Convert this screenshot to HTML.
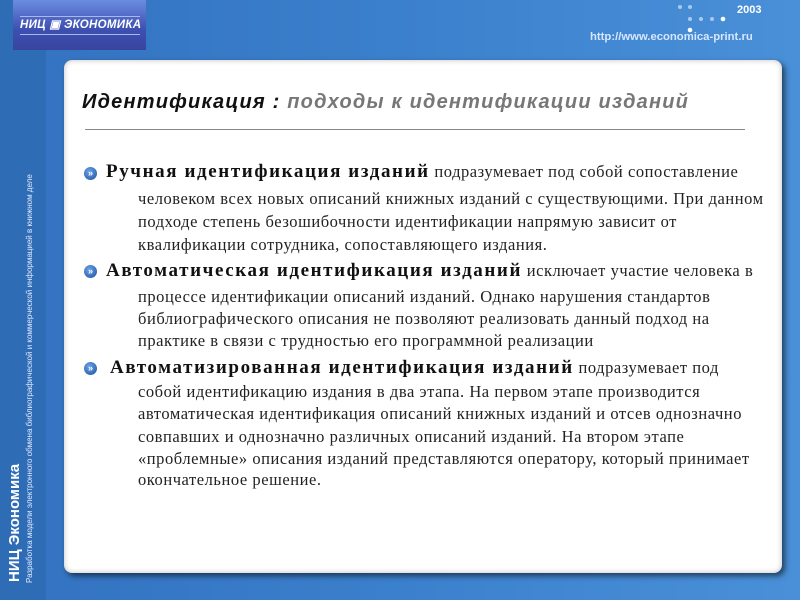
<!DOCTYPE html>
<html><head><meta charset="utf-8"><style>
body{margin:0;width:800px;height:600px;overflow:hidden;position:relative;background:linear-gradient(90deg,#3372c0 0%,#3b80cc 50%,#4a90d8 100%);font-family:"Liberation Serif",serif}
#strip{position:absolute;left:0;top:0;width:46px;height:600px;background:#2f6cb6}
#logo{position:absolute;left:13px;top:0;width:133px;height:50px;background:linear-gradient(#6a8ce0,#3d4fb0 60%,#37459f);}
#logo .t{position:absolute;left:7px;top:16px;width:120px;height:17px;border-top:1px solid #aab8f0;border-bottom:1px solid #aab8f0;color:#fff;font:italic bold 11.5px "Liberation Sans",sans-serif;line-height:17px;white-space:nowrap;letter-spacing:.3px}
#box{position:absolute;left:64px;top:60px;width:718px;height:513px;background:#fff;border-radius:8px;box-shadow:3px 3px 6px rgba(0,0,0,.55),inset 0 0 6px rgba(0,0,0,.25)}
.l{position:absolute;white-space:nowrap;font-size:16.5px;letter-spacing:0.55px;color:#222}
.h{font-weight:bold;font-size:19px;letter-spacing:1.6px;color:#111}
.b{position:absolute;width:13px;height:13px;border-radius:50%;background:radial-gradient(circle at 40% 35%,#6aa2e8,#1d4f9e);color:#fff;font:bold 9px "Liberation Sans",sans-serif;line-height:13px;text-align:center}
.v{position:absolute;transform:rotate(-90deg);transform-origin:0 0;white-space:nowrap;color:#fff;font-family:"Liberation Sans",sans-serif}
</style></head><body>
<div id="strip"></div>
<div id="logo"><div class="t">НИЦ ▣ ЭКОНОМИКА</div></div>
<div class="v" style="left:6px;top:582px;font-weight:bold;font-size:15px">НИЦ Экономика</div>
<div class="v" style="left:25px;top:583px;font-size:8px;color:#dde8ff">Разработка модели электронного обмена библиографической и коммерческой информацией в книжном деле</div>
<div style="position:absolute;left:737px;top:4px;color:#fff;font:bold 11px 'Liberation Sans',sans-serif">2003</div>
<div style="position:absolute;left:590px;top:31px;color:#d8e6ff;font:bold 11.3px 'Liberation Sans',sans-serif">http://www.economica-print.ru</div>
<svg style="position:absolute;left:670px;top:0" width="100" height="40"><g fill="#a9c8f0"><circle cx="10" cy="7" r="2"/><circle cx="20" cy="7" r="2"/><circle cx="20" cy="19" r="2"/><circle cx="31" cy="19" r="2"/><circle cx="42" cy="19" r="2"/></g><circle cx="53" cy="19" r="2.3" fill="#fff"/><circle cx="20" cy="30" r="2.3" fill="#fff"/></svg>
<div id="box"></div>
<div style="position:absolute;left:82px;top:91px;font:italic bold 20px 'Liberation Sans',sans-serif;letter-spacing:1.2px;color:#111;white-space:nowrap">Идентификация : <span style="color:#777">подходы к идентификации изданий</span></div>
<div style="position:absolute;left:85px;top:129px;width:660px;height:1px;background:#888"></div>
<div class="b" style="left:84px;top:167px">»</div>
<div class="l" style="left:106px;top:161px"><span class="h">Ручная идентификация изданий</span> подразумевает под собой сопоставление</div>
<div class="l" style="left:138px;top:189px">человеком всех новых описаний книжных изданий с существующими. При данном</div>
<div class="l" style="left:138px;top:212px">подходе степень безошибочности идентификации напрямую зависит от</div>
<div class="l" style="left:138px;top:235px">квалификации сотрудника, сопоставляющего издания.</div>
<div class="b" style="left:84px;top:265px">»</div>
<div class="l" style="left:106px;top:260px"><span class="h">Автоматическая идентификация изданий</span> исключает участие человека в</div>
<div class="l" style="left:138px;top:287px">процессе идентификации описаний изданий. Однако нарушения стандартов</div>
<div class="l" style="left:138px;top:309px">библиографического описания не позволяют реализовать данный подход на</div>
<div class="l" style="left:138px;top:331px">практике в связи с трудностью его программной реализации</div>
<div class="b" style="left:84px;top:362px">»</div>
<div class="l" style="left:110px;top:357px"><span class="h">Автоматизированная идентификация изданий</span> подразумевает под</div>
<div class="l" style="left:138px;top:382px">собой идентификацию издания в два этапа. На первом этапе производится</div>
<div class="l" style="left:138px;top:404px">автоматическая идентификация описаний книжных изданий и отсев однозначно</div>
<div class="l" style="left:138px;top:427px">совпавших и однозначно различных описаний изданий. На втором этапе</div>
<div class="l" style="left:138px;top:449px">«проблемные» описания изданий представляются оператору, который принимает</div>
<div class="l" style="left:138px;top:470px">окончательное решение.</div>
</body></html>
